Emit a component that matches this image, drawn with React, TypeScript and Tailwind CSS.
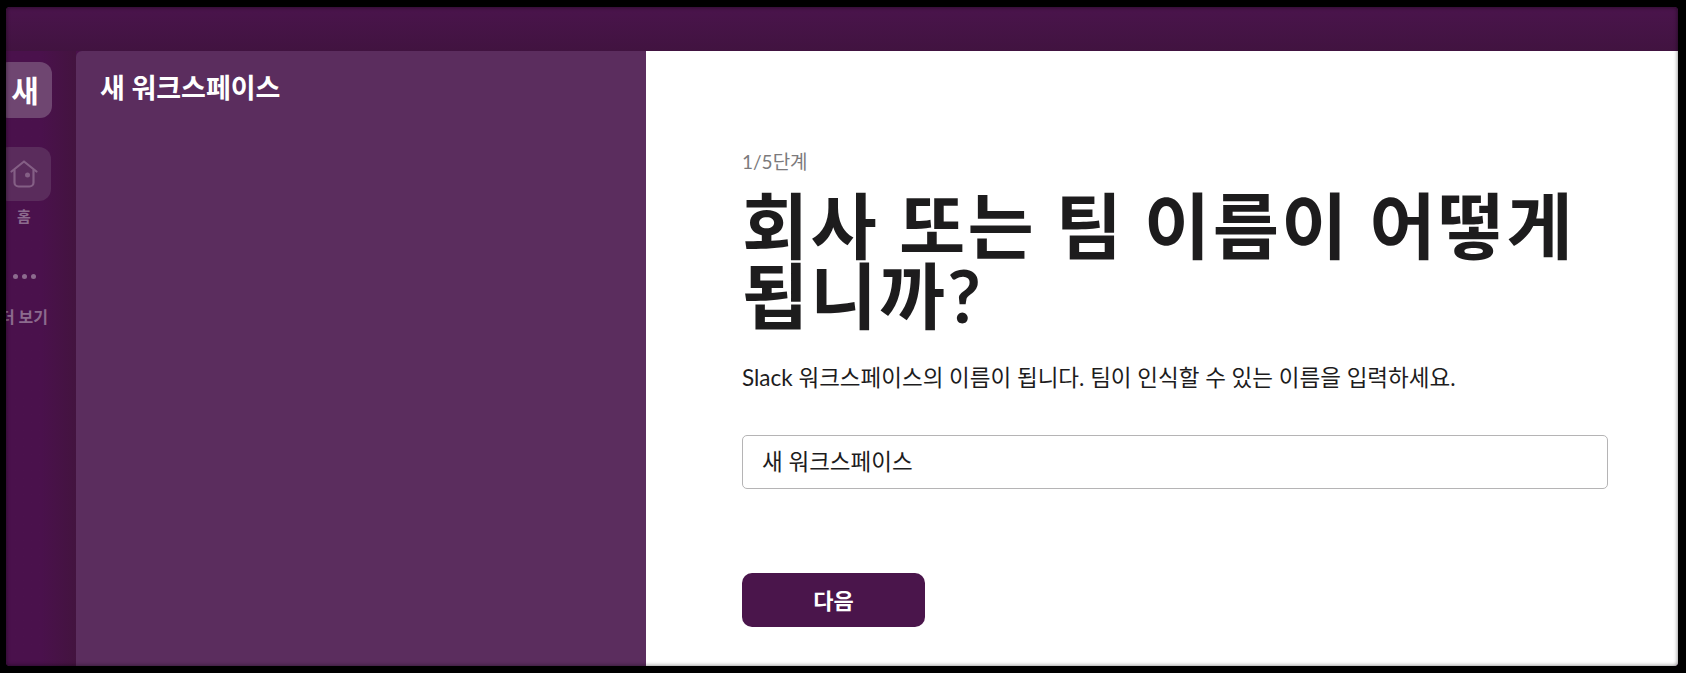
const sans = "font-['Lato','Noto_Sans_CJK_KR',sans-serif]";

function Rail() {
  return (
    <div className="flex w-[70px] shrink-0 overflow-hidden bg-gradient-to-r from-[#4a114c] via-[#4a114c] to-[#43133f]">
      <div className="ml-[-10px] flex w-[56px] shrink-0 flex-col items-center">
        <div className="mt-[11px] flex h-[56px] w-[56px] items-center justify-center rounded-[12px] bg-[#6f4671] pl-[2px] text-[30px] font-bold text-white">
          새
        </div>
        <div className="mt-[29px] flex h-[54px] w-[54px] items-center justify-center rounded-[12px] bg-[#5a2c5c]">
          <svg width="28" height="28" viewBox="0 0 28 28" fill="none" stroke="#845f85" strokeWidth="2.200" strokeLinejoin="round" strokeLinecap="round">
            <path d="M1.500 11.500 14 1.500l12.500 10" />
            <path d="M4.500 10v12.500a4 4 0 0 0 4 4h11a4 4 0 0 0 4-4V10" />
            <circle cx="17.500" cy="15" r="2.500" fill="#845f85" stroke="none" />
          </svg>
        </div>
        <div className="mt-[5px] text-[15px] leading-[20px] font-bold text-[#8c6b8e]">홈</div>
        <div className="mt-[48px] flex gap-[4px]">
          <span className="h-[5px] w-[5px] rounded-full bg-[#8c6b8e]" />
          <span className="h-[5px] w-[5px] rounded-full bg-[#8c6b8e]" />
          <span className="h-[5px] w-[5px] rounded-full bg-[#8c6b8e]" />
        </div>
        <div className="mt-[28px] text-[16px] leading-[20px] font-bold whitespace-nowrap text-[#8c6b8e]">더 보기</div>
      </div>
    </div>
  );
}

export default function App() {
  return (
    <div className={`relative flex h-[673px] w-[1686px] bg-black pt-[7px] pr-[8px] pb-[7px] pl-[6px] ${sans}`}>
      <div className="relative flex flex-1 flex-col overflow-hidden rounded-[4px] bg-[#4a114c]">
        <div className="h-[44px] shrink-0 bg-gradient-to-b from-[#4a144c] to-[#411340]" />
        <div className="flex min-h-0 flex-1">
          <Rail />
          <aside className="w-[570px] shrink-0 rounded-tl-[6px] bg-[#5b2d5e] px-[24px] pt-[21px]">
            <div className="text-[27px] leading-[32px] font-bold whitespace-nowrap text-white">새 워크스페이스</div>
          </aside>
          <main className="flex-1 bg-white pt-[100px] pr-[70px] pl-[96px]">
            <div className="text-[19px] leading-[22px] text-[#7c7a7c]">1/5단계</div>
            <h1 className="mt-[17px] text-[72px] leading-[70px] font-bold tracking-[2.3px] text-[#1d1c1d]">
              회사 또는 팀 이름이 어떻게 됩니까?
            </h1>
            <p className="mt-[32px] text-[22.5px] leading-[32px] text-[#1d1c1d]">
              Slack 워크스페이스의 이름이 됩니다. 팀이 인식할 수 있는 이름을 입력하세요.
            </p>
            <div className="mt-[41px] flex h-[54px] items-center rounded-[5px] border border-[#b5b4b5] pl-[19px] text-[22.5px] text-[#1d1c1d]">
              새 워크스페이스
            </div>
            <button className="mt-[84px] block h-[54px] w-[183px] rounded-[10px] bg-[#4a154b] text-[22px] font-bold text-white">
              다음
            </button>
          </main>
        </div>
        <div className="pointer-events-none absolute inset-0 rounded-[4px] shadow-[inset_0_0_4px_rgba(0,0,0,0.55)]" />
      </div>
    </div>
  );
}
